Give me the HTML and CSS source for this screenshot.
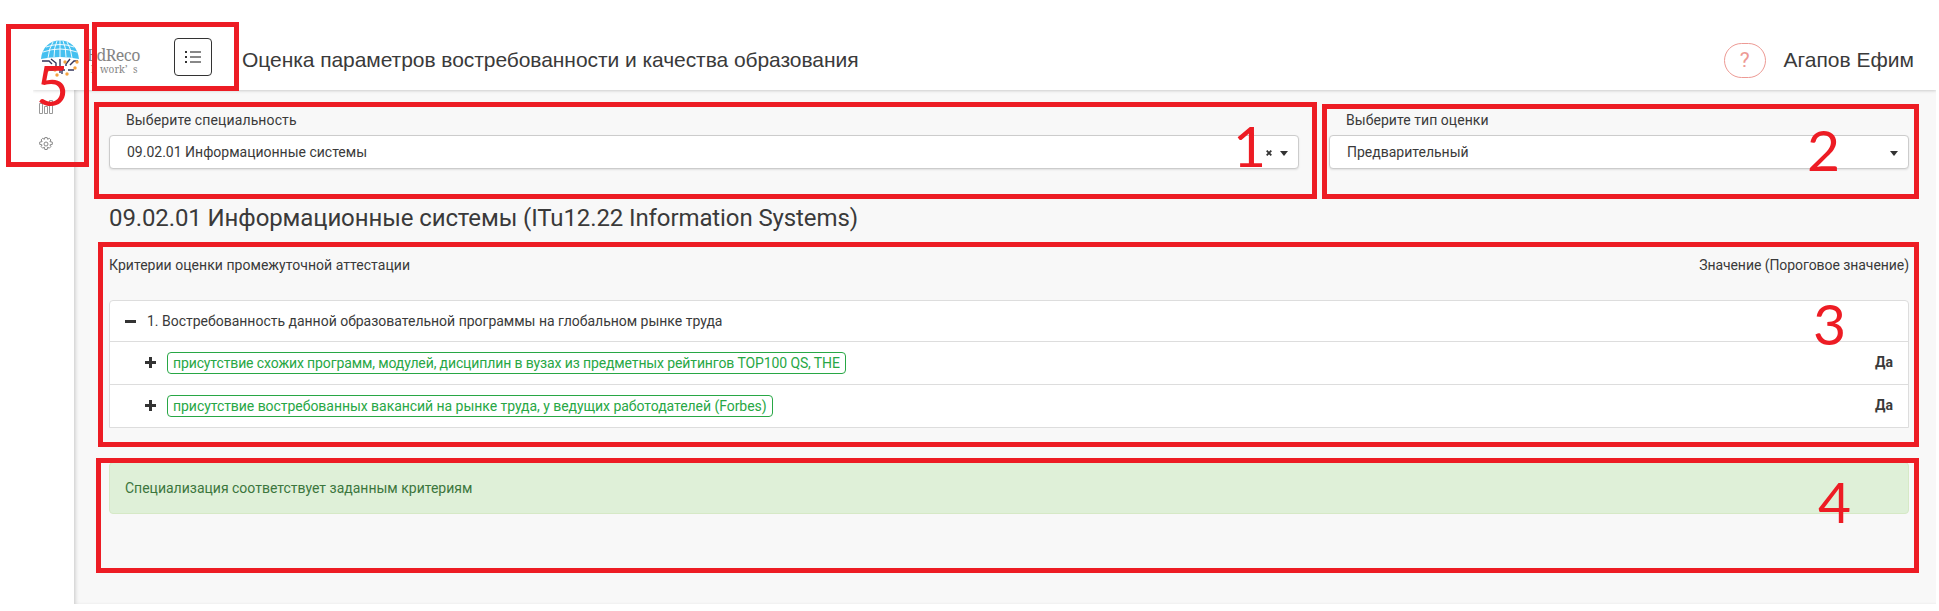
FILE: index.html
```html
<!DOCTYPE html>
<html lang="ru">
<head>
<meta charset="utf-8">
<title>EdReco</title>
<link rel="stylesheet" href="styles.css">
</head>
<body>
<div class="app">
  <header class="header">
    <div class="logo">
      <svg class="globe" width="40" height="40" viewBox="0 0 40 40" fill="none">
        <path d="M1 20C2 9 9 1.500 20 1.500S38 9 39 20Q20 16 1 20Z" fill="#45c0f0"/>
        <path d="M20 1V18M13 3Q9 9 8 19M27 3Q31 9 32 19M17 2Q14 8 14 18M23 2Q26 8 26 18M6 8Q20 3 34 8M3 13Q20 7 37 13" stroke="#fff" stroke-width=".9"/>
        <path d="M2 22H9L12 25M11 20L16 24V29M20 20V34M25 31H22V35M30 20L26 25V27M38 22H34L30 26M8 31H14M28 31H34" stroke="#34365c" stroke-width="1.400"/>
        <g fill="#f4a340"><circle cx="8" cy="31" r="1.700"/><circle cx="15" cy="31" r="1.700"/><circle cx="17" cy="36" r="1.700"/><circle cx="27" cy="35" r="1.700"/><circle cx="35" cy="29" r="1.700"/><circle cx="37" cy="23" r="1.700"/><circle cx="25" cy="23" r="1.700"/></g>
      </svg>
      <div class="brand"><span class="brand-name">EdReco</span><span class="brand-sub"><i class="lead">l</i>work<i class="tick">’</i>s</span></div>
    </div>
    <button class="menu" aria-label="Меню">
      <svg width="16" height="12" viewBox="0 0 16 12"><path d="M0 1h2M0 6h2M0 11h2" stroke="#333" stroke-width="2"/><path d="M5 1h11M5 6h11M5 11h11" stroke="#888" stroke-width="2"/></svg>
    </button>
    <h1 class="title">Оценка параметров востребованности и качества образования</h1>
    <button class="help">?</button>
    <span class="user">Агапов Ефим</span>
  </header>
  <div class="body">
    <nav class="side">
      <svg width="14" height="14" viewBox="0 0 14 14" fill="none" stroke="#999"><path d="M.5 3.500h3v10h-3zM5.500 6.500h3v7h-3zM10.500 .5h3v13h-3z"/></svg>
      <svg width="14" height="14" viewBox="0 0 14 14" fill="none" stroke="#888"><circle cx="7" cy="7" r="2"/><path d="M5.800 .6h2.400l.4 1.700 1.700-1 1.600 1.600-1 1.700 2.400.5v2.300l-2.400.5 1 1.700-1.600 1.600-1.700-1-.4 2.300H5.800l-.4-2.300-1.700 1-1.600-1.600 1-1.700-2.400-.5V5.100l2.400-.5-1-1.700 1.600-1.600 1.700 1z"/></svg>
    </nav>
    <main class="main">
      <div class="filters">
        <div class="field wide"><label class="label-spec">Выберите специальность</label>
          <div class="select"><span>09.02.01 Информационные системы</span><span class="ctl"><svg width="6" height="6" viewBox="0 0 6 6"><path d="M.7 .7l4.600 4.600M5.300 .7l-4.600 4.600" stroke="#333" stroke-width="1.800"/></svg><i class="caret"></i></span></div></div>
        <div class="field"><label class="label-type">Выберите тип оценки</label>
          <div class="select"><span>Предварительный</span><span class="ctl"><i class="caret"></i></span></div></div>
      </div>
      <h2 class="heading">09.02.01 Информационные системы (ITu12.22 Information Systems)</h2>
      <div class="cols"><span class="col-name">Критерии оценки промежуточной аттестации</span><span class="col-value">Значение (Пороговое значение)</span></div>
      <div class="list">
        <div class="row top"><svg width="11" height="11" viewBox="0 0 11 11"><path d="M0 5.500h11" stroke="#333" stroke-width="3"/></svg><span>1. Востребованность данной образовательной программы на глобальном рынке труда</span></div>
        <div class="row sub"><svg width="11" height="11" viewBox="0 0 11 11"><path d="M0 5.500h11M5.500 0v11" stroke="#333" stroke-width="3"/></svg><span class="tag tag-rating">присутствие схожих программ, модулей, дисциплин в вузах из предметных рейтингов TOP100 QS, THE</span><b>Да</b></div>
        <div class="row sub"><svg width="11" height="11" viewBox="0 0 11 11"><path d="M0 5.500h11M5.500 0v11" stroke="#333" stroke-width="3"/></svg><span class="tag tag-jobs">присутствие востребованных вакансий на рынке труда, у ведущих работодателей (Forbes)</span><b>Да</b></div>
      </div>
      <div class="alert">Специализация соответствует заданным критериям</div>
    </main>
  </div>
</div>
<div class="mark mark-5"><span>5</span></div>
<div class="mark mark-menu"></div>
<div class="mark mark-1"><span>1</span></div>
<div class="mark mark-2"><span>2</span></div>
<div class="mark mark-3"><span>3</span></div>
<div class="mark mark-4"><span>4</span></div>
</body>
</html>
```
FILE: styles.css
```css
* { box-sizing: border-box; }
body { margin: 0; background: #fff; color: #3a3a3a; font: 14px/20px Roboto, "Liberation Sans", sans-serif; }
.app { width: 1903px; height: 604px; margin-left: 33px; display: flex; flex-direction: column; overflow: hidden; }
.header { height: 90px; flex: none; display: flex; align-items: center; padding: 24px 22px 0 7px; background: #fff; box-shadow: 0 1px 3px rgba(0,0,0,.15); z-index: 1; font-family: "Liberation Sans", sans-serif; }
.logo { display: flex; width: 134px; height: 38px; align-items: flex-start; }
.globe { flex: none; margin-top: 1px; }
.brand { display: flex; flex-direction: column; margin-left: 7px; padding-top: 9px; color: #858585; font-family: "Noto Serif", "Liberation Serif", "DejaVu Serif", serif; }
.brand-name { font-size: 16px; line-height: 16px; letter-spacing: -.5px; }
.brand-sub { font-size: 10px; line-height: 13px; padding-left: 4px; display: flex; }
.lead { width: 9px; font-style: normal; }
.tick { width: 8px; font-style: normal; }
.menu { width: 38px; height: 38px; padding: 0; border: 1px solid #333; border-radius: 4px; background: #fff; display: flex; align-items: center; justify-content: center; }
.title { margin: 5px 0 0 30px; font-size: 21px; line-height: 24px; letter-spacing: -.06px; font-weight: 400; flex: 1; white-space: nowrap; }
.help { width: 42px; height: 35px; margin: 6px 18px 0 0; border: 1px solid #ed9a94; border-radius: 18px; background: #fff; color: #ed9a94; font: 21px Roboto, sans-serif; padding: 0; }
.user { margin-top: 5px; font-size: 21px; line-height: 24px; white-space: nowrap; }
.body { flex: 1; display: flex; }
.side { width: 41px; flex: none; display: flex; flex-direction: column; gap: 23px; padding: 10px 0 0 6px; }
.main { flex: 1; min-width: 0; background: #f8f8f8; box-shadow: inset 3px 0 4px -2px rgba(0,0,0,.2); padding: 20px 27px 0 35px; }
.filters { display: flex; gap: 30px; }
.field { width: 580px; flex: none; }
.wide { width: 1190px; }
label { display: block; padding-left: 17px; height: 25px; line-height: 20px; }
.label-spec { letter-spacing: .12px; }
.label-type { letter-spacing: .05px; }
.select { height: 34px; display: flex; align-items: center; justify-content: space-between; padding: 0 10px 0 17px; border: 1px solid #ccc; border-radius: 4px; background: #fff; box-shadow: 0 1px 2px rgba(0,0,0,.1); }
.ctl { display: flex; align-items: center; gap: 8px; margin-top: 2px; }
.caret { border: 4px solid transparent; border-top: 5px solid #333; border-bottom: 0; }
.heading { margin: 34px 0 0; font-size: 24px; line-height: 30px; font-weight: 400; letter-spacing: -.105px; }
.cols { display: flex; justify-content: space-between; margin-top: 22px; }
.col-name { letter-spacing: .04px; }
.col-value { letter-spacing: -.06px; }
.list { margin-top: 25px; border: 1px solid #ddd; border-radius: 4px 4px 0 0; background: #fff; }
.row { display: flex; align-items: center; height: 43px; border-bottom: 1px solid #ddd; }
.row:last-child { border: 0; height: 42px; }
.top { height: 41px; padding-left: 15px; gap: 11px; letter-spacing: -.01px; }
.sub { padding: 0 15px 0 35px; gap: 11px; }
.sub svg { margin-bottom: 2px; }
.tag { border: 1px solid #28a745; border-radius: 4px; color: #28a745; height: 22px; line-height: 20px; padding: 0 5px; }
.tag-rating { letter-spacing: -.12px; }
.tag-jobs { letter-spacing: -.045px; }
.row b { margin-left: auto; margin-bottom: 2px; font-weight: 700; }
.alert { margin-top: 34px; height: 52px; padding: 15px; border: 1px solid #d6e9c6; border-radius: 4px; background: #dff0d8; color: #3c763d; }
.mark { position: absolute; z-index: 5; border: 5px solid #ed1c24; color: #ed1c24; font: 57px/58px Lato, "Open Sans", sans-serif; pointer-events: none; }
.mark span { position: absolute; }
.mark-5 { left: 6px; top: 24px; width: 83px; height: 143px; }
.mark-5 span { left: 25px; top: 26px; }
.mark-menu { left: 92px; top: 22px; width: 147px; height: 69px; }
.mark-1 { left: 94px; top: 102px; width: 1223px; height: 97px; }
.mark-1 span { left: 1134px; top: 9px; }
.mark-2 { left: 1322px; top: 104px; width: 597px; height: 95px; }
.mark-2 span { left: 480px; top: 11px; }
.mark-3 { left: 98px; top: 242px; width: 1821px; height: 205px; }
.mark-3 span { left: 1710px; top: 47px; }
.mark-4 { left: 96px; top: 458px; width: 1823px; height: 115px; }
.mark-4 span { left: 1717px; top: 9px; }
```
